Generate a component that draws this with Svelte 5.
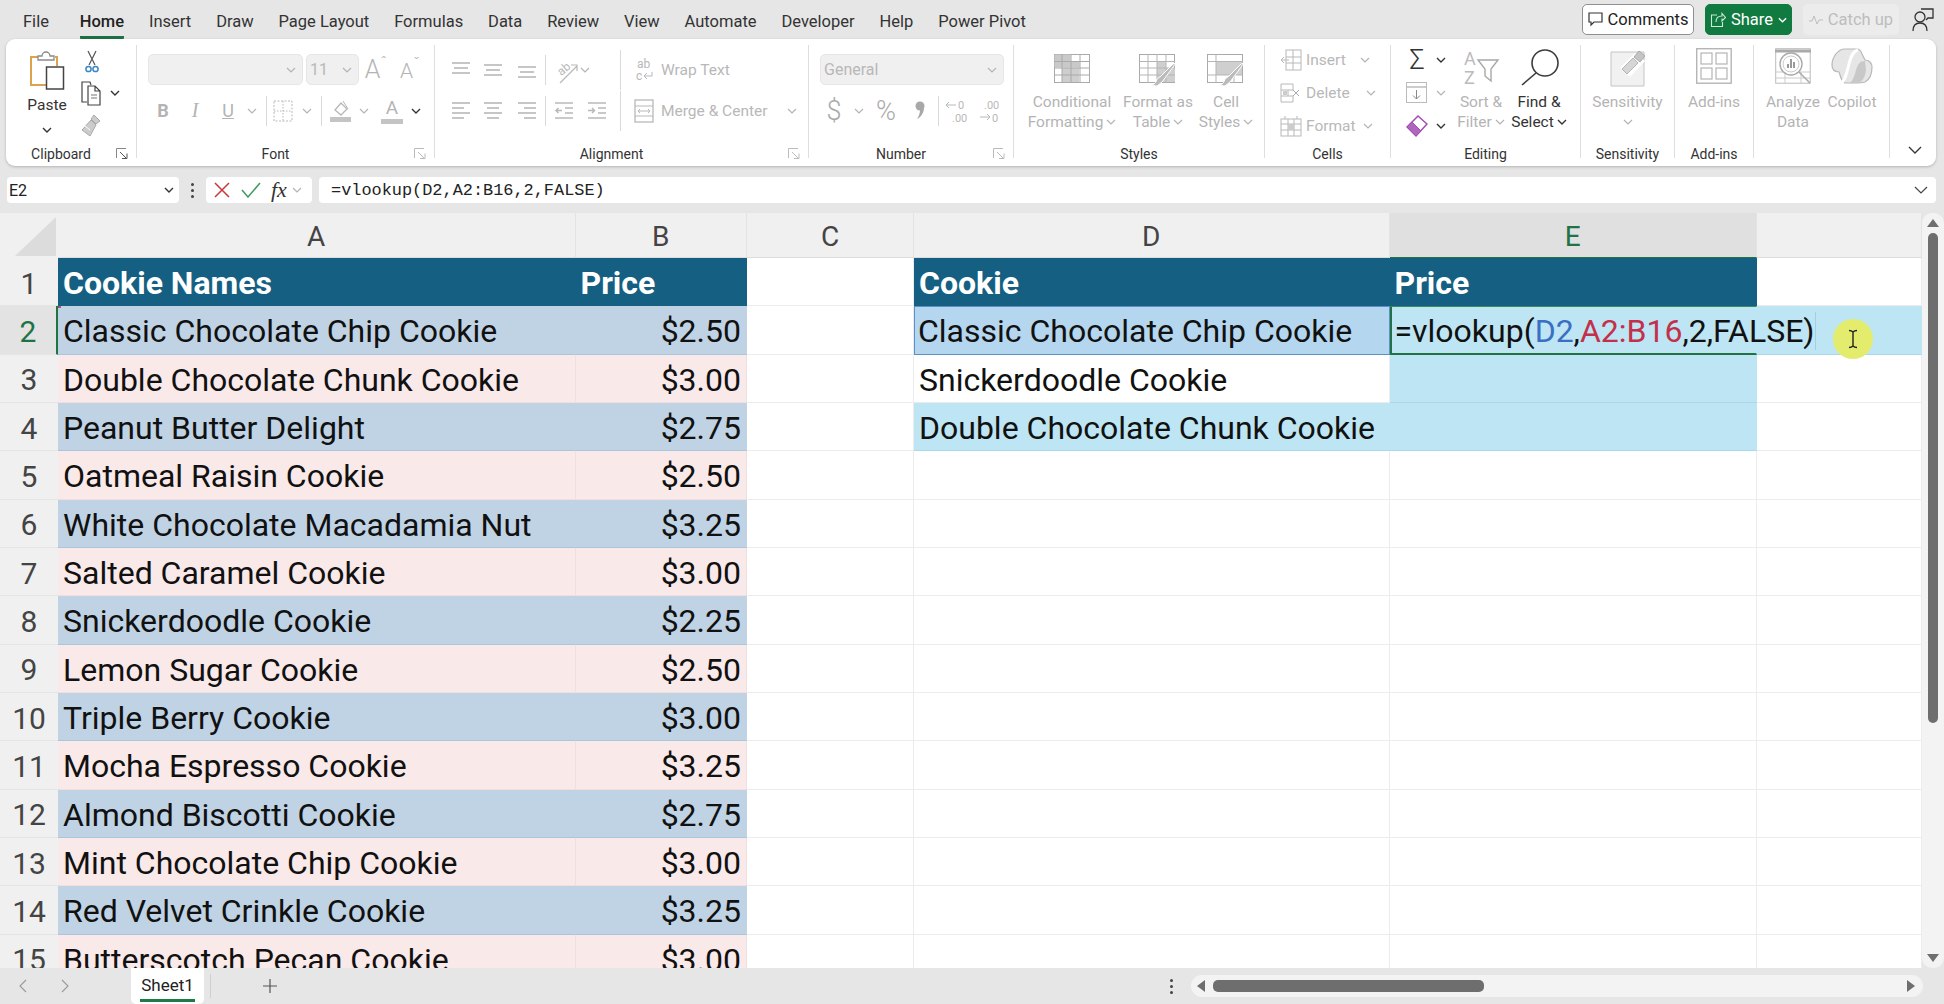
<script>
	const G = '#b8b8b8';
	const lines = (ys, xs) => ys.map((y, i) => `<path d="M${xs[i][0]} ${y}H${xs[i][1]}"/>`).join('');
	const ICONS = {
		paste: [36, 40, `<path d="M9 7H2v28h15M26 7h2v9" fill="none" stroke="#dca24c" stroke-width="2"/><path d="M9 9V6h4a4 4 0 0 1 8 0h4v4H9z" fill="#fff" stroke="#8a8a8a" stroke-width="1.3"/><rect x="17.5" y="17" width="17" height="22" fill="#fff" stroke="#444" stroke-width="1.5"/>`],
		cut: [14, 24, `<path d="M3 1l7 14M11 1L4 15" stroke="#555" fill="none" stroke-width="1.2"/><circle cx="3.5" cy="19" r="2.6" fill="none" stroke="#3b87c4" stroke-width="1.5"/><circle cx="10.5" cy="19" r="2.6" fill="none" stroke="#3b87c4" stroke-width="1.5"/>`],
		copy: [22, 26, `<g fill="none" stroke="#444" stroke-width="1.2"><path d="M7 22H2V2h8l1 3"/><path d="M8 6h7l5 5v14H8zM15 6v5h5"/></g><path d="M11 15h6M11 18h6" stroke="#777"/>`],
		brush: [22, 26, `<path d="M14 3l6 6-4 3-5-5zM11 8l5 5-6 11-8-6z" fill="#ccc" stroke="#aaa" stroke-width="1"/><path d="M5 14l5 4" stroke="#fff"/>`],
		launch: [12, 12, `<path d="M.5 10V.5H10" fill="none" stroke="#888"/><path d="M4 4l6 6M6 10.5h5v-5" fill="none" stroke="#555"/>`],
		launchg: [12, 12, `<path d="M.5 10V.5H10M4 4l6 6M6 10.5h5v-5" fill="none" stroke="#bbb"/>`],
		chev: [10, 6, `<path d="M1 1l4 4 4-4" fill="none" stroke="#333" stroke-width="1.4"/>`],
		chevg: [10, 6, `<path d="M1 1l4 4 4-4" fill="none" stroke="#b4b4b4" stroke-width="1.2"/>`],
		alignT: [20, 18, `<g stroke="${G}" stroke-width="1.6">${lines([2, 7, 12], [[1, 19], [3, 17], [1, 19]])}</g>`],
		alignM: [20, 18, `<g stroke="${G}" stroke-width="1.6">${lines([4, 9, 14], [[1, 19], [3, 17], [1, 19]])}</g>`],
		alignB: [20, 18, `<g stroke="${G}" stroke-width="1.6">${lines([6, 11, 16], [[1, 19], [3, 17], [1, 19]])}</g>`],
		left: [20, 20, `<g stroke="${G}" stroke-width="1.6">${lines([2, 7, 12, 17], [[1, 19], [1, 13], [1, 19], [1, 13]])}</g>`],
		center: [20, 20, `<g stroke="${G}" stroke-width="1.6">${lines([2, 7, 12, 17], [[1, 19], [4, 16], [1, 19], [4, 16]])}</g>`],
		right: [20, 20, `<g stroke="${G}" stroke-width="1.6">${lines([2, 7, 12, 17], [[1, 19], [7, 19], [1, 19], [7, 19]])}</g>`],
		indL: [20, 20, `<g stroke="${G}" stroke-width="1.5" fill="none">${lines([2, 17], [[1, 19], [1, 19]])}<path d="M11 7h8M11 12h8M8 9.5H2M4.5 7L2 9.5 4.5 12"/></g>`],
		indR: [20, 20, `<g stroke="${G}" stroke-width="1.5" fill="none">${lines([2, 17], [[1, 19], [1, 19]])}<path d="M11 7h8M11 12h8M1 9.5h6M5 7l2.500 2.500L5 12"/></g>`],
		orient: [28, 30, `<text x="6" y="18" transform="rotate(-40 12 15)" font-size="12" fill="${G}" font-family="Roboto">ab</text><path d="M8 28L25 11M19 10h6v6" fill="none" stroke="${G}" stroke-width="1.2"/>`],
		borders: [20, 22, `<rect x="1" y="1" width="18" height="20" fill="none" stroke="${G}" stroke-dasharray="2 1.500"/><path d="M10 1v20M1 11h18" stroke="${G}" stroke-dasharray="1.500 1.500"/>`],
		fill: [22, 24, `<path d="M5 11l6-7 6 6-6 6z" fill="none" stroke="${G}" stroke-width="1.3"/><path d="M13 2l5 8" stroke="${G}"/><rect y="18" width="21" height="5" fill="#c4c4c4"/>`],
		wrap: [18, 26, `<text x="1" y="11" font-size="12" fill="${G}" font-family="Roboto">ab</text><text x="0" y="23" font-size="12" fill="${G}" font-family="Roboto">c</text><path d="M8 19h8v-4M11 16l-3 3 3 3" fill="none" stroke="${G}"/>`],
		merge: [20, 24, `<rect x="1" y="1" width="18" height="22" fill="none" stroke="${G}" stroke-width="1.3"/><path d="M1 7h18M1 17h18M4 12h12M6 10l-2 2 2 2M14 10l2 2-2 2" fill="none" stroke="${G}"/>`],
		comma: [12, 22, `<circle cx="6" cy="6" r="4.500" fill="#a8a8a8"/><path d="M10 7c0 6-3 10-7 12 2-3 3-6 3-9z" fill="#a8a8a8"/>`],
		decL: [24, 26, `<text x="13" y="11" font-size="11" fill="${G}" font-family="Roboto">0</text><text x="7" y="24" font-size="11" fill="${G}" font-family="Roboto">.00</text><path d="M11 7H1M4 4L1 7l3 3" fill="none" stroke="${G}"/>`],
		decR: [24, 26, `<text x="7" y="11" font-size="11" fill="${G}" font-family="Roboto">.00</text><text x="15" y="24" font-size="11" fill="${G}" font-family="Roboto">0</text><path d="M3 19h10M10 16l3 3-3 3" fill="none" stroke="${G}"/>`],
		cond: [36, 29, `<rect x=".5" y=".5" width="35" height="28" fill="#fff" stroke="#aaa"/><path d="M.5 .5h16v7h9v6h-25z" fill="#c9c9c9"/><path d="M8 14h17v7H8zM8 21h17v7H8z" fill="#c9c9c9" opacity=".9"/><path d="M0 7.500h36M0 14h36M0 21h36M8 0v29M17 0v29M26 0v29" stroke="#aaa"/>`],
		table: [38, 34, `<rect x=".5" y=".5" width="35" height="28" fill="#fff" stroke="#aaa"/><path d="M18 8h9v6h9v14H18z" fill="#cfcfcf"/><path d="M0 7.500h36M0 14h36M0 21h36M9 0v29M18 0v29M27 0v29" stroke="#b5b5b5"/><path d="M37 9L26 24l-3 4-5 4c-3 0-4-1-5-1 3-1 4-3 5-6l4-3 12-12z" fill="#bbb" stroke="#fff"/>`],
		cells: [38, 34, `<rect x=".5" y=".5" width="35" height="28" fill="#fff" stroke="#aaa"/><path d="M9 8h26v13H9z" fill="#cfcfcf"/><path d="M0 7.500h36M0 21h36M9 0v29M27 21v8" stroke="#b5b5b5"/><path d="M37 9L26 24l-3 4-5 4c-3 0-4-1-5-1 3-1 4-3 5-6l4-3 12-12z" fill="#bbb" stroke="#fff"/>`],
		insert: [22, 22, `<rect x="6" y="1" width="15" height="20" fill="none" stroke="${G}"/><path d="M6 8h15M6 14h15M13 1v20" stroke="${G}"/><path d="M9 11H1M4 8l-3 3 3 3" fill="#fff" stroke="${G}"/>`],
		del: [22, 22, `<path d="M1 2h12v6H8v6h5v6H1z" fill="none" stroke="${G}"/><path d="M1 8h7M1 14h7" stroke="${G}"/><rect x="3" y="9" width="4" height="4" fill="#ccc"/><path d="M13 8l6 6M19 8l-6 6" stroke="#aaa"/>`],
		format: [22, 22, `<rect x="1" y="4" width="20" height="17" fill="none" stroke="${G}"/><path d="M1 9h20M1 15h20M8 4v17M14 4v17" stroke="${G}"/><rect x="8" y="9" width="6" height="6" fill="#ccc"/><path d="M5 1v3M17 1v3" stroke="${G}"/>`],
		filldown: [22, 22, `<rect x=".5" y=".5" width="20" height="20" fill="none" stroke="#bbb" stroke-width="1"/><path d="M1 5h19" stroke="#999"/><path d="M10.500 8v9M7 13.500l3.500 3.500 3.500-3.500" fill="none" stroke="#888"/>`],
		eraser: [22, 24, `<path d="M1 13L12 2l9 8-11 12z" fill="#fff" stroke="#a34bb1" stroke-width="1.5"/><path d="M1 13l5-5 9 9-5 5z" fill="#b066bd" stroke="#a34bb1"/>`],
		sort: [40, 40, `<text x="3" y="17" font-size="18" fill="#bbb" font-family="Roboto">A</text><text x="3" y="36" font-size="18" fill="#bbb" font-family="Roboto">Z</text><path d="M17 12h20l-7 9v12l-6-5v-7z" fill="#fff" stroke="#a8a8a8" stroke-width="1.4"/>`],
		find: [40, 38, `<circle cx="26" cy="15" r="13" fill="none" stroke="#3c3c3c" stroke-width="1.6"/><path d="M17 25L3 37" stroke="#3c3c3c" stroke-width="1.6"/>`],
		sens: [36, 40, `<path d="M1 4h33v34H1z" fill="#f1f1f1" stroke="#c4c4c4"/><path d="M10 20l15-15 10 8-15 16z" fill="#fff"/><path d="M12 21l11-11 5 5-11 11z" fill="#d6d6d6" stroke="#b4b4b4"/><path d="M24 9l5-6 6 5-5 6z" fill="#c4c4c4" stroke="#aaa"/>`],
		addins: [36, 36, `<rect x=".7" y=".7" width="34.500" height="34.500" fill="#fff" stroke="#b5b5b5" stroke-width="1.4"/><rect x="5" y="5" width="11" height="11" fill="none" stroke="#b5b5b5" stroke-width="1.2"/><rect x="20" y="5" width="11" height="11" fill="none" stroke="#b5b5b5" stroke-width="1.2"/><rect x="5" y="20" width="11" height="11" fill="none" stroke="#b5b5b5" stroke-width="1.2"/><rect x="20" y="20" width="11" height="11" fill="none" stroke="#b5b5b5" stroke-width="1.2"/>`],
		analyze: [36, 36, `<rect x=".7" y=".7" width="34.500" height="34.500" fill="#fff" stroke="#bbb"/><path d="M0 3h36" stroke="#aaa" stroke-width="3"/><path d="M0 24h36M0 30h36M10 24v12M26 24v12" stroke="#ccc"/><circle cx="16" cy="16" r="11" fill="#fff" stroke="#aaa" stroke-width="1.4"/><circle cx="16" cy="16" r="8" fill="none" stroke="#ccc"/><path d="M13 20v-4M16 20v-9M19 20v-6" stroke="#999" stroke-width="2"/><path d="M24 24l11 11" stroke="#aaa" stroke-width="1.5"/>`],
		copilot: [42, 36, `<path d="M14 1h12c3 0 4 2 5 5l3 6c4 0 7 3 7 7 0 8-3 13-7 15-3 1-5 1-12 1h-8c-3-2-4-4-5-8l-1-3c-5 0-7-3-7-7C1 9 7 1 14 1z" fill="#e6e6e6" stroke="#b8b8b8" stroke-width="1.2"/><path d="M27 2c-5 1-7 6-9 14-2 8-4 17-8 19" fill="none" stroke="#fff" stroke-width="3"/><path d="M34 13c-5 0-7 3-9 9-1 5-3 10-6 13h6c6 0 9-5 10-13" fill="#c8c8c8"/>`]
	};

	const fontRow = [
		{ t: 'B', w: 30, cls: 'b' }, { t: 'I', w: 34, cls: 'i' }, { t: 'U', w: 32, cls: 'u' }, { i: 'chevg', w: 16 }, { sep: [6, 5] },
		{ i: 'borders', w: 22 }, { i: 'chevg', w: 26 }, { sep: [1, 5] }, { i: 'fill', w: 28 }, { i: 'chevg', w: 18 },
		{ t: 'A', w: 38, cls: 'acolor' }, { i: 'chev', w: 10 }
	];
	const alignTop = [
		{ i: 'alignT', w: 30 }, { i: 'alignM', w: 34 }, { i: 'alignB', w: 34 }, { sep: [1, 6] }, { i: 'orient', w: 28 }, { i: 'chevg', w: 10 }
	];
	const alignBot = [
		{ i: 'left', w: 30 }, { i: 'center', w: 34 }, { i: 'right', w: 34 }, { sep: [1, 6] }, { i: 'indL', w: 24 }, { i: 'indR', w: 42 }
	];
	const numRow = [
		{ t: '$', w: 28, cls: 'sym' }, { i: 'chevg', w: 22 }, { t: '%', w: 32, cls: 'sym' }, { i: 'comma', w: 36 }, { sep: [0, 5] },
		{ i: 'decL', w: 26 }, { i: 'decR', w: 38 }
	];
	const cellItems = [['insert', 'Insert', 10], ['del', 'Delete', 12], ['format', 'Format', 3]];
	const tabs = ['File', 'Home', 'Insert', 'Draw', 'Page Layout', 'Formulas', 'Data', 'Review', 'View', 'Automate', 'Developer', 'Help', 'Power Pivot'];

	const cookies = [
		['Classic Chocolate Chip Cookie', '$2.50'], ['Double Chocolate Chunk Cookie', '$3.00'], ['Peanut Butter Delight', '$2.75'],
		['Oatmeal Raisin Cookie', '$2.50'], ['White Chocolate Macadamia Nut', '$3.25'], ['Salted Caramel Cookie', '$3.00'],
		['Snickerdoodle Cookie', '$2.25'], ['Lemon Sugar Cookie', '$2.50'], ['Triple Berry Cookie', '$3.00'],
		['Mocha Espresso Cookie', '$3.25'], ['Almond Biscotti Cookie', '$2.75'], ['Mint Chocolate Chip Cookie', '$3.00'],
		['Red Velvet Crinkle Cookie', '$3.25'], ['Butterscotch Pecan Cookie', '$3.00']
	];
	const lookups = ['Classic Chocolate Chip Cookie', 'Snickerdoodle Cookie', 'Double Chocolate Chunk Cookie'];
</script>

{#snippet icon(name)}
	<svg width={ICONS[name][0]} height={ICONS[name][1]} viewBox="0 0 {ICONS[name][0]} {ICONS[name][1]}">{@html ICONS[name][2]}</svg>
{/snippet}

{#snippet toolRow(items)}
	<div class="toolrow">
		{#each items as it}
			{#if it.sep}
				<span class="vsep" style="margin:0 {it.sep[1]}px 0 {it.sep[0]}px"></span>
			{:else}
				<span class="tool {it.cls ?? ''}" style="width:{it.w}px">
					{#if it.i}{@render icon(it.i)}{:else}{it.t}{/if}
				</span>
			{/if}
		{/each}
	</div>
{/snippet}

{#snippet label(text, launcher)}
	<div class="label">
		<span>{text}</span>
		{#if launcher}<i class="launch">{@render icon(launcher)}</i>{/if}
	</div>
{/snippet}

<div class="app">
	<header class="top">
		<nav class="tabs">
			{#each tabs as t}
				<span class="tab" class:active={t === 'Home'}>{t}</span>
			{/each}
		</nav>
		<div class="actions">
			<button class="comments">
				<svg width="15" height="15" viewBox="0 0 15 15"><path d="M1 1h13v9H6l-3 3v-3H1z" fill="none" stroke="#333" stroke-width="1.200"/></svg>
				Comments
			</button>
			<button class="share">
				<svg width="16" height="16" viewBox="0 0 16 16"><path d="M7 3H1.500v11.500h11V10M6 10c0-4 2-6 6-6V1.500L15.500 5.500 12 9V6.500" fill="none" stroke="#cfe8da" stroke-width="1.100"/></svg>
				Share
				<svg width="9" height="6" viewBox="0 0 10 6"><path d="M1 1l4 4 4-4" fill="none" stroke="#fff" stroke-width="1.500"/></svg>
			</button>
			<button class="catch">
				<svg width="14" height="10" viewBox="0 0 14 10"><path d="M0 6h3l2-5 3 8 2-4h4" fill="none" stroke="#bdbdbd"/></svg>
				Catch up
			</button>
			<svg class="person" width="22" height="24" viewBox="0 0 22 24"><circle cx="8" cy="9" r="5" fill="none" stroke="#333" stroke-width="1.300"/><path d="M1 23c0-6 3-8 7-8s7 2 7 8" fill="none" stroke="#333" stroke-width="1.300"/><path d="M9 1h12v9h-5l-2 2" fill="none" stroke="#333" stroke-width="1.300"/></svg>
		</div>
	</header>

	<section class="ribbon">
		<div class="group g-clip">
			<div class="body clip">
				<div class="paste">
					{@render icon('paste')}
					<span>Paste</span>
					{@render icon('chev')}
				</div>
				<div class="clip-tools">
					{@render icon('cut')}
					<span class="copyrow">{@render icon('copy')}{@render icon('chev')}</span>
					{@render icon('brush')}
				</div>
			</div>
			{@render label('Clipboard', 'launch')}
		</div>

		<div class="group g-font">
			<div class="body rows pad">
				<div class="toolrow">
					<span class="combo fontname">{@render icon('chevg')}</span>
					<span class="combo fontsize"><em>11</em>{@render icon('chevg')}</span>
					<span class="tool grow"><b class="big">A</b><small>ˆ</small></span>
					<span class="tool grow"><b class="mid">A</b><small>ˇ</small></span>
				</div>
				{@render toolRow(fontRow)}
			</div>
			{@render label('Font', 'launchg')}
		</div>

		<div class="group g-align">
			<div class="body rows pad align">
				<div class="toolrow">
					{@render toolRow(alignTop)}
					<span class="vsep wide"></span>
					<span class="wl">{@render icon('wrap')}<span>Wrap Text</span></span>
				</div>
				<div class="toolrow">
					{@render toolRow(alignBot)}
					<span class="vsep wide tight"></span>
					<span class="wl">{@render icon('merge')}<span>Merge &amp; Center</span>{@render icon('chevg')}</span>
				</div>
			</div>
			{@render label('Alignment', 'launchg')}
		</div>

		<div class="group g-num">
			<div class="body rows pad">
				<span class="combo general"><em>General</em>{@render icon('chevg')}</span>
				{@render toolRow(numRow)}
			</div>
			{@render label('Number', 'launchg')}
		</div>

		<div class="group g-styles">
			<div class="body cols">
				<div class="col c84 off">
					<div class="ic">{@render icon('cond')}</div>
					<span>Conditional</span><span>Formatting {@render icon('chevg')}</span>
				</div>
				<div class="col c88 off">
					<div class="ic">{@render icon('table')}</div>
					<span>Format as</span><span>Table {@render icon('chevg')}</span>
				</div>
				<div class="col c48 off">
					<div class="ic">{@render icon('cells')}</div>
					<span>Cell</span><span>Styles {@render icon('chevg')}</span>
				</div>
			</div>
			{@render label('Styles')}
		</div>

		<div class="group g-cells">
			<div class="body stack">
				{#each cellItems as [ic, text, gap]}
					<div class="stackrow off">
						{@render icon(ic)}
						<span class="stext" style="margin-right:{gap}px">{text}</span>
						{@render icon('chevg')}
					</div>
				{/each}
			</div>
			{@render label('Cells')}
		</div>

		<div class="group g-edit">
			<div class="body cols">
				<div class="editstack">
					<span class="er"><span class="sigma">Σ</span>{@render icon('chev')}</span>
					<span class="er">{@render icon('filldown')}{@render icon('chevg')}</span>
					<span class="er">{@render icon('eraser')}{@render icon('chev')}</span>
				</div>
				<div class="col c58 off">
					<div class="ic tall">{@render icon('sort')}</div>
					<span>Sort &amp;</span><span>Filter {@render icon('chevg')}</span>
				</div>
				<div class="col c58">
					<div class="ic tall">{@render icon('find')}</div>
					<span>Find &amp;</span><span>Select {@render icon('chev')}</span>
				</div>
			</div>
			{@render label('Editing')}
		</div>

		<div class="group g-sens">
			<div class="body cols center">
				<div class="col off">
					<div class="ic tall">{@render icon('sens')}</div>
					<span>Sensitivity</span><span>{@render icon('chevg')}</span>
				</div>
			</div>
			{@render label('Sensitivity')}
		</div>

		<div class="group g-add">
			<div class="body cols center">
				<div class="col off">
					<div class="ic tall">{@render icon('addins')}</div>
					<span>Add-ins</span>
				</div>
			</div>
			{@render label('Add-ins')}
		</div>

		<div class="group g-data">
			<div class="body cols">
				<div class="col c66 off">
					<div class="ic tall">{@render icon('analyze')}</div>
					<span>Analyze</span><span>Data</span>
				</div>
				<div class="col c52 off">
					<div class="ic tall">{@render icon('copilot')}</div>
					<span>Copilot</span>
				</div>
			</div>
			<div class="label"></div>
		</div>

		<div class="collapse">
			<svg width="14" height="8" viewBox="0 0 14 8"><path d="M1 1l6 6 6-6" fill="none" stroke="#333" stroke-width="1.300"/></svg>
		</div>
	</section>

	<section class="formula">
		<div class="namebox"><span>E2</span>{@render icon('chev')}</div>
		<div class="dots"><i></i><i></i><i></i></div>
		<div class="fx">
			<svg width="18" height="18" viewBox="0 0 18 18"><path d="M2 2l14 14M16 2L2 16" stroke="#c8373f" stroke-width="1.500"/></svg>
			<svg width="20" height="16" viewBox="0 0 20 16"><path d="M1 8l6 7L19 1" fill="none" stroke="#3e9a5f" stroke-width="1.500"/></svg>
			<span class="fxtext">fx</span>
			{@render icon('chevg')}
		</div>
		<div class="input">
			<span>=vlookup(D2,A2:B16,2,FALSE)</span>
			<svg width="14" height="8" viewBox="0 0 14 8"><path d="M1 1l6 6 6-6" fill="none" stroke="#444" stroke-width="1.200"/></svg>
		</div>
	</section>

	<section class="sheetwrap">
		<div class="sheet">
			<div class="ch corner">
				<svg width="58" height="45" viewBox="0 0 58 45"><path d="M15 43L56 4v39z" fill="#dcdcdc"/></svg>
			</div>
			{#each ['A', 'B', 'C', 'D', 'E', 'F'] as c}
				<div class="ch" class:sel={c === 'E'}>{c === 'F' ? '' : c}</div>
			{/each}

			<div class="rh">1</div>
			<div class="c head">Cookie Names</div>
			<div class="c head">Price</div>
			<div class="c"></div>
			<div class="c head">Cookie</div>
			<div class="c head">Price</div>
			<div class="c"></div>

			{#each cookies as [name, price], i}
				{@const row = i + 2}
				<div class="rh" class:sel={row === 2}>{row}</div>
				<div class="c" class:blue={i % 2 === 0} class:pink={i % 2 === 1}>{name}</div>
				<div class="c num" class:blue={i % 2 === 0} class:pink={i % 2 === 1}>{price}</div>
				<div class="c"></div>
				{#if row === 2}
					<div class="c lookup1">{lookups[0]}</div>
					<div class="c cyan active">
						<span class="edit">=vlookup(<span class="ref1">D2</span>,<span class="ref2">A2:B16</span>,2,FALSE)</span>
					</div>
					<div class="c cyan"></div>
				{:else if row === 3}
					<div class="c">{lookups[1]}</div>
					<div class="c cyan"></div>
					<div class="c"></div>
				{:else if row === 4}
					<div class="c cyan over">{lookups[2]}</div>
					<div class="c cyan"></div>
					<div class="c"></div>
				{:else}
					<div class="c"></div>
					<div class="c"></div>
					<div class="c"></div>
				{/if}
			{/each}

			<div class="range"></div>
			<div class="pointer">
				<svg width="12" height="20" viewBox="0 0 12 20"><path d="M2 1.500c2 0 3 .5 4 1.500 1-1 2-1.500 4-1.500M6 3v14M2 18.500c2 0 3-.5 4-1.500 1 1 2 1.500 4 1.500" fill="none" stroke="#222" stroke-width="1.400"/></svg>
			</div>
		</div>
		<div class="vscroll">
			<svg width="12" height="8" viewBox="0 0 12 8"><path d="M6 0l6 8H0z" fill="#6e6e6e"/></svg>
			<div class="vthumb"></div>
			<svg width="12" height="8" viewBox="0 0 12 8"><path d="M6 8L0 0h12z" fill="#6e6e6e"/></svg>
		</div>
	</section>

	<footer class="bottom">
		<svg class="nav" width="8" height="14" viewBox="0 0 8 14"><path d="M7 1L1 7l6 6" fill="none" stroke="#999" stroke-width="1.100"/></svg>
		<svg class="nav next" width="8" height="14" viewBox="0 0 8 14"><path d="M1 1l6 6-6 6" fill="none" stroke="#999" stroke-width="1.100"/></svg>
		<div class="sheettab"><span>Sheet1</span></div>
		<span class="tabsep"></span>
		<svg class="plus" width="14" height="14" viewBox="0 0 14 14"><path d="M7 0v14M0 7h14" stroke="#555" stroke-width="1.200"/></svg>
		<div class="hdots"><i></i><i></i><i></i></div>
		<div class="hscroll">
			<svg width="8" height="12" viewBox="0 0 8 12"><path d="M0 6l8-6v12z" fill="#6e6e6e"/></svg>
			<div class="hthumb"></div>
			<svg width="8" height="12" viewBox="0 0 8 12"><path d="M8 6L0 0v12z" fill="#6e6e6e"/></svg>
		</div>
	</footer>
</div>

<style>
	:global(body) {
		margin: 0;
		background: #e6e6e6;
	}
	.app {
		width: 1944px;
		height: 1004px;
		overflow: hidden;
		display: flex;
		flex-direction: column;
		background: #e6e6e6;
		font-family: Roboto, 'Liberation Sans', sans-serif;
		color: #333;
	}
	svg {
		display: block;
		flex: none;
	}

	/* title + tabs */
	.top {
		height: 39px;
		flex: none;
		display: flex;
		justify-content: space-between;
	}
	.tabs {
		display: flex;
		gap: 24.9px;
		padding-left: 23px;
	}
	.tab {
		font-size: 16.5px;
		line-height: 43px;
		height: 36px;
		color: #333;
	}
	.tab.active {
		margin-left: 6px;
		font-weight: 500;
		color: #222;
		border-bottom: 3px solid #1e7145;
		border-radius: 1px;
	}
	.actions {
		display: flex;
		align-items: flex-start;
		gap: 11px;
		padding: 4px 10px 0 0;
	}
	.actions button {
		height: 31px;
		display: flex;
		align-items: center;
		justify-content: center;
		gap: 5px;
		font: 16.5px Roboto, sans-serif;
		border-radius: 5px;
		padding: 0;
	}
	.comments {
		width: 112px;
		background: #fff;
		border: 1px solid #8f8f8f;
		color: #222;
	}
	.share {
		width: 87px;
		background: #107a40;
		border: 1px solid #107a40;
		color: #fff;
	}
	.catch {
		width: 96px;
		background: #ececec;
		border: 0;
		color: #bdbdbd;
	}
	.person {
		margin: 4px 0 0 2px;
	}

	/* ribbon */
	.ribbon {
		height: 127px;
		flex: none;
		margin: 0 8px 0 6px;
		padding: 6px 0 8px;
		box-sizing: border-box;
		background: #fff;
		border-radius: 9px;
		box-shadow: 0 1px 3px rgba(0, 0, 0, 0.22);
		display: flex;
	}
	.group {
		flex: none;
		display: flex;
		flex-direction: column;
		border-right: 1.5px solid #dedede;
		box-sizing: border-box;
	}
	.g-clip { width: 131px; }
	.g-font { width: 298px; }
	.g-align { width: 374px; }
	.g-num { width: 205px; }
	.g-styles { width: 251px; }
	.g-cells { width: 126px; }
	.g-edit { width: 190px; }
	.g-sens { width: 94px; }
	.g-add { width: 79px; }
	.g-data { width: 136px; }
	.body {
		flex: 1;
		min-height: 0;
	}
	.label {
		height: 16px;
		line-height: 16px;
		margin-bottom: -4px;
		display: flex;
		align-items: center;
		font-size: 14px;
		color: #333;
	}
	.label span {
		flex: 1;
		text-align: center;
	}
	.launch {
		width: 20px;
		flex: none;
	}
	.clip {
		display: flex;
		padding: 5px 0 0 21px;
	}
	.paste {
		width: 40px;
		display: flex;
		flex-direction: column;
		align-items: center;
		font-size: 15.5px;
	}
	.paste span {
		margin: 5px 0 12px;
		line-height: 20px;
	}
	.clip-tools {
		margin-left: 4px;
		display: flex;
		flex-direction: column;
		gap: 6px;
		padding: 0 0 0 9px;
		align-items: flex-start;
	}
	.clip-tools > svg:first-child {
		margin-left: 5px;
	}
	.copyrow {
		display: flex;
		align-items: center;
		gap: 8px;
	}
	.rows {
		display: flex;
		flex-direction: column;
		gap: 10px;
		padding-top: 9px;
	}
	.pad {
		padding-left: 11px;
	}
	.toolrow {
		display: flex;
		align-items: center;
		height: 31px;
	}
	.tool {
		flex: none;
		display: flex;
		align-items: center;
		justify-content: center;
		font-size: 18px;
		color: #b4b4b4;
	}
	.tool.b { font-weight: 700; }
	.tool.i { font-family: 'Liberation Serif', serif; font-style: italic; font-size: 20px; }
	.tool.u { text-decoration: underline; }
	.tool.acolor {
		font-size: 19px;
		height: 27px;
		line-height: 22px;
		box-sizing: border-box;
		background: linear-gradient(#c4c4c4, #c4c4c4) center bottom / 22px 5px no-repeat;
		align-items: flex-start;
	}
	.tool.sym {
		font-size: 27px;
		font-weight: 300;
		color: #aaa;
	}
	.tool.grow {
		width: 34px;
		align-items: flex-start;
	}
	.big { font-size: 25px; font-weight: 300; }
	.mid { font-size: 21px; font-weight: 300; margin-top: 3px; }
	.tool small { font-size: 15px; line-height: 15px; }
	.vsep {
		flex: none;
		width: 1px;
		height: 30px;
		background: #d9d9d9;
	}
	.combo {
		flex: none;
		box-sizing: border-box;
		height: 31px;
		background: #f0f0f0;
		border: 1px solid #e6e6e6;
		border-radius: 5px;
		display: flex;
		align-items: center;
		justify-content: flex-end;
		padding-right: 6px;
		margin-right: 3px;
	}
	.combo em {
		font-style: normal;
		margin-right: auto;
		padding-left: 3px;
		font-size: 16px;
		color: #b8b8b8;
	}
	.fontname { width: 155px; }
	.fontsize { width: 53px; margin-right: 0; }
	.general { width: 184px; margin-right: 0; }
	.wide { margin: 0 15px 0 30px; height: 40px; }
	.wide.tight { margin: 0 13px 0 2px; }
	.wl {
		display: flex;
		align-items: center;
		gap: 7px;
		font-size: 15.5px;
		color: #b8b8b8;
		white-space: nowrap;
	}
	.wl svg:last-child:not(:first-child) {
		margin-left: 12px;
	}
	.cols {
		display: flex;
		padding-top: 3px;
	}
	.cols.center {
		justify-content: center;
	}
	.g-styles .cols { padding-left: 16px; }
	.g-data .cols { padding-left: 6px; }
	.col {
		flex: none;
		display: flex;
		flex-direction: column;
		align-items: center;
		font-size: 15.5px;
		line-height: 20px;
		color: #333;
		white-space: nowrap;
	}
	.col span {
		display: flex;
		align-items: center;
		gap: 3px;
		height: 20px;
	}
	.col.off { color: #b4b4b4; }
	.c84 { width: 84px; }
	.c88 { width: 88px; }
	.c48 { width: 48px; }
	.c58 { width: 58px; }
	.c66 { width: 66px; }
	.c52 { width: 52px; }
	.ic {
		height: 44px;
		display: flex;
		align-items: flex-start;
		padding-top: 6px;
		box-sizing: border-box;
	}
	.ic.tall {
		padding-top: 0;
	}
	.stack {
		margin-top: -2px;
		padding: 0 0 0 15px;
		display: flex;
		flex-direction: column;
	}
	.stackrow {
		height: 33px;
		display: flex;
		align-items: center;
		gap: 4px;
		font-size: 15.5px;
	}
	.stackrow.off { color: #b8b8b8; }
	.stext { line-height: 20px; }
	.editstack {
		width: 61px;
		flex: none;
		display: flex;
		flex-direction: column;
		margin-top: -5px;
		padding-left: 15px;
		box-sizing: border-box;
	}
	.er {
		height: 33px;
		display: flex;
		align-items: center;
		gap: 8px;
	}
	.sigma {
		width: 22px;
		text-align: center;
		font-size: 27px;
		font-weight: 300;
		color: #333;
	}
	.collapse {
		flex: 1;
		display: flex;
		align-items: flex-end;
		justify-content: center;
		padding: 0 0 4px 4px;
	}

	/* formula bar */
	.formula {
		height: 26px;
		flex: none;
		margin: 11px 8px 10px 7px;
		display: flex;
	}
	.formula > div {
		box-sizing: border-box;
	}
	.namebox {
		width: 172px;
		background: #fff;
		border-radius: 4px;
		display: flex;
		align-items: center;
		justify-content: space-between;
		padding: 0 5px 0 2px;
		font-size: 16px;
		color: #222;
	}
	.dots, .hdots {
		display: flex;
		flex-direction: column;
		justify-content: center;
		align-items: center;
		gap: 3px;
	}
	.dots {
		width: 27px;
	}
	.dots i, .hdots i {
		width: 3px;
		height: 3px;
		border-radius: 50%;
		background: #444;
	}
	.fx {
		width: 106px;
		margin-right: 7px;
		background: #fff;
		border-radius: 4px;
		display: flex;
		align-items: center;
		gap: 10px;
		padding-left: 7px;
	}
	.fxtext {
		font: italic 22px 'Liberation Serif', serif;
		color: #333;
		width: 15px;
		margin-right: -4px;
	}
	.input {
		flex: 1;
		background: #fff;
		border-radius: 4px;
		display: flex;
		align-items: center;
		justify-content: space-between;
		padding: 0 8px 0 12px;
		font: 16.9px 'Liberation Mono', monospace;
		color: #222;
	}

	/* sheet */
	.sheetwrap {
		flex: 1;
		min-height: 0;
		display: flex;
	}
	.sheet {
		width: 1922px;
		flex: none;
		position: relative;
		overflow: hidden;
		background: #fff;
		display: grid;
		grid-template-columns: 58px 517.5px 171.5px 167px 475.5px 367.5px 165px;
		grid-template-rows: 45px;
		grid-auto-rows: 48.33px;
		font-size: 32px;
		color: #111;
	}
	.ch {
		background: #f0f0f0;
		border-right: 1px solid #e3e3e3;
		border-bottom: 1px solid #dcdcdc;
		box-sizing: border-box;
		display: flex;
		align-items: center;
		justify-content: center;
		padding-top: 2px;
		font-size: 28px;
		color: #444;
	}
	.ch.corner {
		border: 0;
		padding: 0;
		align-items: flex-start;
		justify-content: flex-start;
	}
	.ch.sel {
		background: #e0e0e0;
		color: #217346;
		border-bottom-color: #217346;
	}
	.rh {
		background: #f0f0f0;
		display: flex;
		align-items: center;
		justify-content: center;
		padding-top: 3px;
		font-size: 30px;
		color: #444;
		border-bottom: 1px solid #e4e4e4;
		box-sizing: border-box;
	}
	.rh.sel {
		background: #e3e3e3;
		color: #217346;
		border-right: 2px solid #217346;
	}
	.c {
		box-sizing: border-box;
		padding: 3px 5px 0;
		line-height: 44px;
		white-space: nowrap;
		border-right: 1px solid #ececec;
		border-bottom: 1px solid #ececec;
		min-width: 0;
	}
	.c.head {
		background: #156082;
		color: #fff;
		font-weight: 700;
		font-size: 32px;
		border-color: #156082;
	}
	.c.num {
		text-align: right;
	}
	.c.blue {
		background: #c0d3e4;
		border-right-color: #c0d3e4;
		border-bottom-color: #a9c6de;
	}
	.c.pink {
		background: #f9e9e9;
		border-right-color: #efdfdf;
		border-bottom-color: #f2dede;
	}
	.c.cyan {
		background: #bee5f3;
		border-right-color: #bee5f3;
		border-bottom-color: #a8d8ea;
	}
	.c.over {
		overflow: visible;
	}
	.c.lookup1 {
		background: #b4d6ee;
		border: 1px solid #5b8fc7;
		line-height: 43px;
		padding-left: 3px;
	}
	.c.active {
		position: relative;
		z-index: 1;
		border-left: 2px solid #217346;
		border-top: 1px solid #3d8b62;
		border-bottom: 2px solid #217346;
		line-height: 42px;
		padding-left: 3px;
		overflow: visible;
	}
	.edit {
		border-right: 1px solid #a3cfdf;
		padding-right: 1px;
	}
	.ref1 { color: #3a6fc4; }
	.ref2 { color: #c3304a; }
	.range {
		position: absolute;
		grid-column: 2 / 4;
		grid-row: 3 / 18;
		border: 1px solid #b5566f;
		border-left-color: #217346;
		border-right-width: 2px;
		pointer-events: none;
	}
	.pointer {
		position: absolute;
		z-index: 2;
		left: 1833px;
		top: 106px;
		width: 40px;
		height: 40px;
		border-radius: 50%;
		background: #e4ec6e;
		display: flex;
		align-items: center;
		justify-content: center;
	}
	.vscroll {
		width: 22px;
		flex: none;
		background: #f3f3f3;
		border-radius: 10px;
		display: flex;
		flex-direction: column;
		align-items: center;
		padding-top: 6px;
		box-sizing: border-box;
	}
	.vthumb {
		width: 10px;
		height: 490px;
		margin: 6px 0 auto;
		background: #6e6e6e;
		border-radius: 5px;
	}
	.vscroll svg:last-child {
		margin-bottom: 6px;
	}

	/* status strip */
	.bottom {
		height: 36px;
		flex: none;
		display: flex;
		align-items: center;
		background: #e6e6e6;
	}
	.nav {
		margin-left: 19px;
	}
	.nav.next {
		margin-left: 34px;
	}
	.sheettab {
		width: 73px;
		height: 36px;
		margin-left: 62px;
		background: #fff;
		border-radius: 0 0 5px 5px;
		display: flex;
		justify-content: center;
		box-sizing: border-box;
	}
	.sheettab span {
		height: 31px;
		line-height: 34px;
		font-size: 17px;
		color: #222;
		padding: 0 1px;
		border-bottom: 3px solid #1e7a48;
	}
	.tabsep {
		width: 1px;
		height: 24px;
		margin-left: 6px;
		background: #cfcfcf;
	}
	.plus {
		margin-left: 52px;
	}
	.hdots {
		margin-left: auto;
		margin-right: 18px;
	}
	.hscroll {
		width: 732px;
		height: 22px;
		margin-right: 21px;
		background: #f3f3f3;
		border-radius: 11px;
		display: flex;
		align-items: center;
		box-sizing: border-box;
		padding: 0 8px 0 6px;
	}
	.hthumb {
		width: 271px;
		height: 12px;
		margin: 0 auto 0 8px;
		background: #6e6e6e;
		border-radius: 5px;
	}
</style>
